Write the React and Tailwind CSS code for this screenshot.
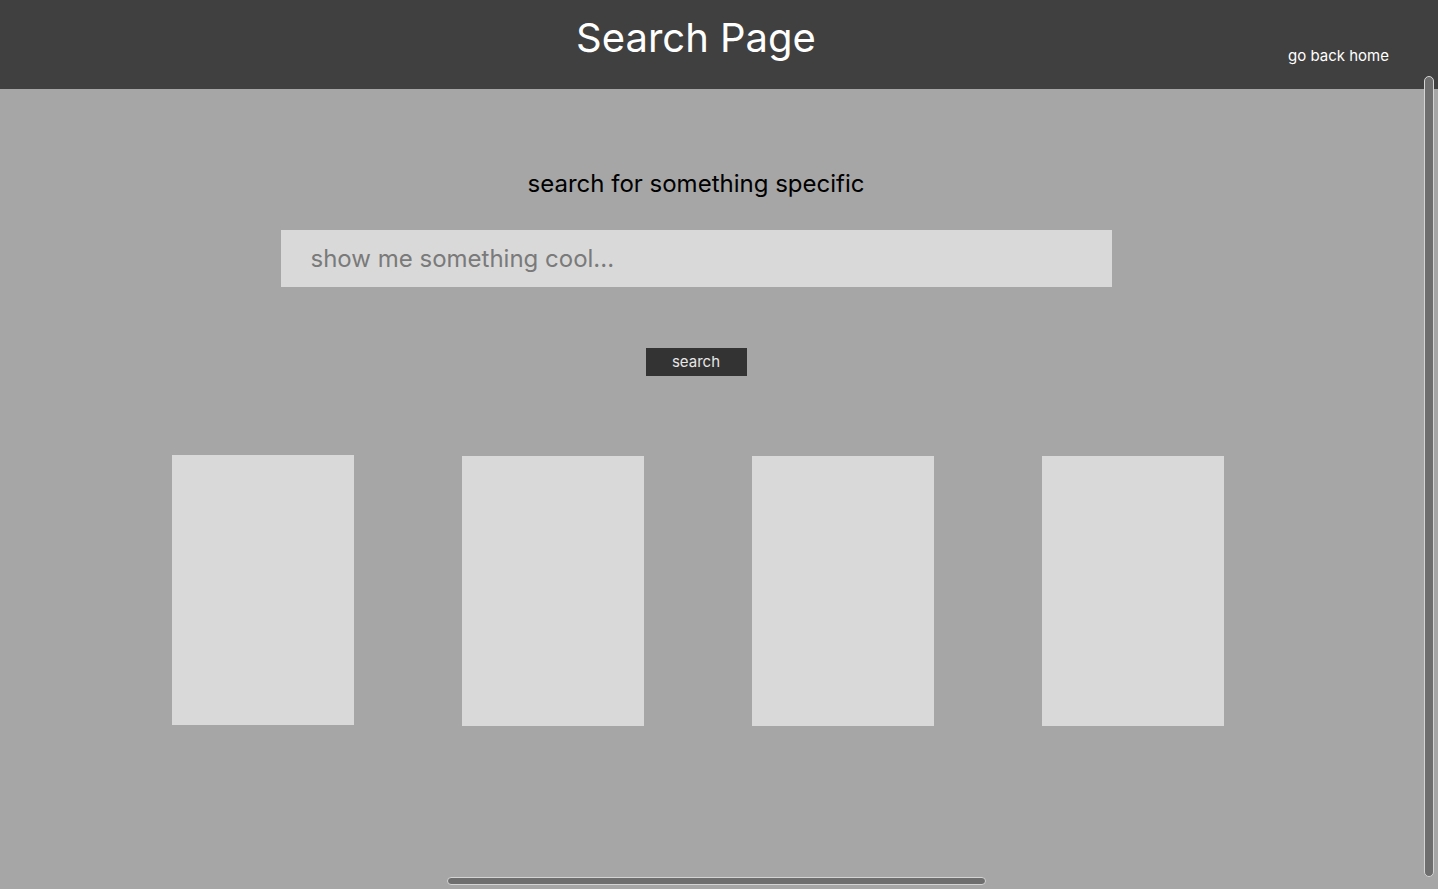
import React from 'react';

const SearchPage = () => {
  const cards = [0, 1, 2, 3];

  return (
    <div
      className="relative h-[889px] w-full overflow-hidden bg-[#a6a6a6]"
      style={{ fontFamily: 'Inter, "Noto Sans", sans-serif' }}
    >
      {/* Header */}
      <header className="h-[89px] w-full bg-[#404040]">
        <div className="relative flex h-full w-[1392px] justify-center">
          <h1 className="mt-[12px] text-[40px] leading-[52px] text-white">Search Page</h1>
          <a className="absolute right-[3px] top-[45px] text-[15px] leading-[22px] text-white">go back home</a>
        </div>
      </header>

      {/* Main */}
      <main className="flex w-[1392px] flex-col items-center">
        <h2 className="mt-[79px] text-[24px] leading-[32px] text-black">search for something specific</h2>
        <input
          className="mt-[30px] h-[57px] w-[831px] bg-[#d9d9d9] pl-[30px] text-[24px] text-black outline-none placeholder:text-[#7a7a7a]"
          placeholder="show me something cool..."
        />
        <button className="mt-[61px] h-[28px] w-[101px] bg-[#333333] text-[15px] text-[#e6e6e6]">search</button>

        <div className="mt-[79px] flex items-start gap-[108px] pl-[3px]">
          {cards.map((i) => (
            <div key={i} className={i === 0 ? 'h-[270px] w-[182px] bg-[#d9d9d9]' : 'mt-[1px] h-[270px] w-[182px] bg-[#d9d9d9]'} />
          ))}
        </div>
      </main>

      {/* Scrollbars */}
      <div className="absolute left-[1424px] top-[76px] h-[801px] w-[10px] rounded-full border border-[#d4d4d4] bg-[#6e6e6e]" />
      <div className="absolute left-[447px] top-[877px] h-[8px] w-[539px] rounded-full border border-[#d4d4d4] bg-[#6e6e6e]" />
    </div>
  );
};

export default function App() {
  return <SearchPage />;
}
